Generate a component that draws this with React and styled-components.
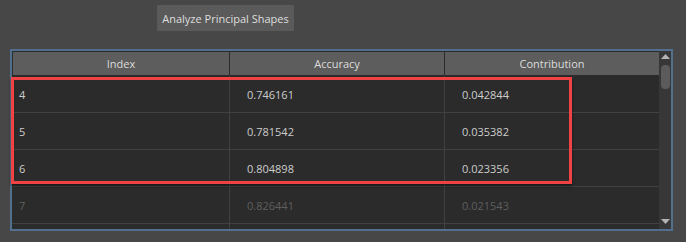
import React from "react";
import styled, { createGlobalStyle } from "styled-components";

const Global = createGlobalStyle`
  html, body { margin: 0; padding: 0; background: #474747; }
  body { font-family: "Open Sans", "Noto Sans", sans-serif; }
`;

const Page = styled.div`
  width: 686px;
  height: 242px;
  background: #474747;
  display: flex;
  flex-direction: column;
  overflow: hidden;
`;

const Toolbar = styled.div`
  display: flex;
  padding: 5px 0 0 157px;
  height: 26px;
`;

const Button = styled.button`
  width: 137px;
  height: 26px;
  border: none;
  border-radius: 1px;
  background: #5a5a5a;
  color: #dedede;
  font-family: "Open Sans", "Noto Sans", sans-serif;
  font-size: 11px;
  padding: 0;
  cursor: pointer;
`;

const Frame = styled.div`
  position: relative;
  margin: 18px 0 0 10px;
  width: 663px;
  height: 182px;
  box-sizing: border-box;
  border: 2px solid #52708e;
  background: #2b2b2b;
  display: flex;
`;

const TableArea = styled.div`
  width: 647px;
  display: flex;
  flex-direction: column;
  overflow: hidden;
`;

const HeaderRow = styled.div`
  display: grid;
  grid-template-columns: 216px 214px 214px;
  column-gap: 1px;
  padding: 1px 0 1px 1px;
  background: #2b2b2b;
`;

const HeaderCell = styled.div`
  height: 23px;
  background: #5d5d5d;
  color: #dcdcdc;
  font-size: 11px;
  display: flex;
  align-items: center;
  justify-content: center;
`;

const Row = styled.div`
  display: grid;
  grid-template-columns: 218px 215px 214px;
  height: 36px;
  flex-shrink: 0;
  border-bottom: 1px solid #414141;
  color: ${(p) => (p.$faded ? "#5e5e5e" : "#cdcdcd")};
`;

const Cell = styled.div`
  display: flex;
  align-items: center;
  font-size: 11px;
  padding-left: ${(p) => p.$pad}px;
  border-right: ${(p) => (p.$last ? "none" : "1px solid #414141")};
`;

const Scrollbar = styled.div`
  width: 12px;
  background: #373737;
  display: flex;
  flex-direction: column;
  align-items: center;
  padding-top: 3px;
  box-sizing: border-box;
`;

const Arrow = styled.svg`
  display: block;
  width: 9px;
  height: 5px;
`;

const Handle = styled.div`
  width: 9px;
  height: 24px;
  border-radius: 4px;
  background: #5b5b5b;
  margin-top: 6px;
`;

const Spacer = styled.div`
  flex: 1;
`;

const BottomArrow = styled.div`
  margin-bottom: 5px;
`;

const Highlight = styled.div`
  position: absolute;
  left: -1px;
  top: 26px;
  width: 561px;
  height: 107px;
  box-sizing: border-box;
  border: 3px solid #f04242;
  box-shadow: 0 2px 3px rgba(0, 0, 0, 0.45);
  pointer-events: none;
`;

const rows = [
  ["4", "0.746161", "0.042844"],
  ["5", "0.781542", "0.035382"],
  ["6", "0.804898", "0.023356"],
  ["7", "0.826441", "0.021543", true],
  ["", "", "", true],
];

export default function App() {
  return (
    <Page>
      <Global />
      <Toolbar>
        <Button>Analyze Principal Shapes</Button>
      </Toolbar>
      <Frame>
        <TableArea>
          <HeaderRow>
            <HeaderCell>Index</HeaderCell>
            <HeaderCell>Accuracy</HeaderCell>
            <HeaderCell>Contribution</HeaderCell>
          </HeaderRow>
          {rows.map(([i, a, c, faded], n) => (
            <Row key={n} $faded={faded}>
              <Cell $pad={7}>{i}</Cell>
              <Cell $pad={17}>{a}</Cell>
              <Cell $pad={17} $last>{c}</Cell>
            </Row>
          ))}
        </TableArea>
        <Scrollbar>
          <Arrow viewBox="0 0 9 5">
            <path d="M4.5 0 L9 5 L0 5 Z" fill="#b4b4b4" />
          </Arrow>
          <Handle />
          <Spacer />
          <BottomArrow>
            <Arrow viewBox="0 0 9 5">
              <path d="M0 0 L9 0 L4.5 5 Z" fill="#b4b4b4" />
            </Arrow>
          </BottomArrow>
        </Scrollbar>
        <Highlight />
      </Frame>
    </Page>
  );
}
